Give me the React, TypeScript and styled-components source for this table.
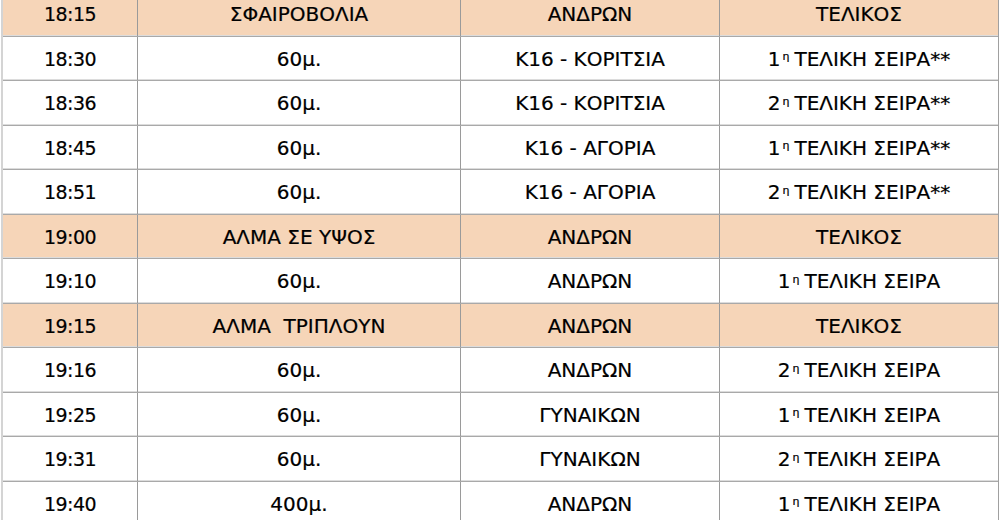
import styled, { createGlobalStyle } from "styled-components";

const GlobalStyle = createGlobalStyle`
  html, body {
    margin: 0;
    padding: 0;
    background: #ffffff;
  }
  body {
    font-family: "DejaVu Sans", Tahoma, Verdana, sans-serif;
    color: #000;
    overflow: hidden;
  }
`;

const Page = styled.div`
  width: 1000px;
  height: 520px;
  overflow: hidden;
  padding-left: 1px;
  box-sizing: border-box;
`;

const Schedule = styled.div`
  margin-top: -8px;
  width: 998px;
  border-left: 2px solid #d4d4d4;
  border-right: 1px solid #a0a0a0;
  box-sizing: border-box;
`;

const Row = styled.div<{ $event?: boolean }>`
  display: grid;
  grid-template-columns: 135px 323px 259px 278px;
  height: 44.5px;
  background: ${(p) => (p.$event ? "#f6d5b8" : "#ffffff")};
  border-bottom: 1px solid #a9a9a9;
  box-shadow: inset 0 -1px 0 #dcdcdc;
  box-sizing: border-box;
`;

const Cell = styled.div`
  display: flex;
  align-items: center;
  justify-content: center;
  font-size: 20px;
  white-space: pre;
  border-right: 1px solid #9a9a9a;
  padding-top: 1px;
  -webkit-text-stroke: 0.2px #000;

  &:last-child {
    border-right: none;
  }
`;

const Digits = styled.span`
  font-size: 19px;
  letter-spacing: -0.6px;
`;

const Ord = styled.span`
  font-size: 11px;
  position: relative;
  top: -2px;
  margin: 0 5px 0 2px;
`;

type Item = {
  time: string;
  what: string;
  who: string;
  phase: string;
  event?: boolean;
};

const rows: Item[] = [
  { time: "18:15", what: "ΣΦΑΙΡΟΒΟΛΙΑ", who: "ΑΝΔΡΩΝ", phase: "ΤΕΛΙΚΟΣ", event: true },
  { time: "18:30", what: "60μ.", who: "Κ16 - ΚΟΡΙΤΣΙΑ", phase: "1|ΤΕΛΙΚΗ ΣΕΙΡΑ**" },
  { time: "18:36", what: "60μ.", who: "Κ16 - ΚΟΡΙΤΣΙΑ", phase: "2|ΤΕΛΙΚΗ ΣΕΙΡΑ**" },
  { time: "18:45", what: "60μ.", who: "Κ16 - ΑΓΟΡΙΑ", phase: "1|ΤΕΛΙΚΗ ΣΕΙΡΑ**" },
  { time: "18:51", what: "60μ.", who: "Κ16 - ΑΓΟΡΙΑ", phase: "2|ΤΕΛΙΚΗ ΣΕΙΡΑ**" },
  { time: "19:00", what: "ΑΛΜΑ ΣΕ ΥΨΟΣ", who: "ΑΝΔΡΩΝ", phase: "ΤΕΛΙΚΟΣ", event: true },
  { time: "19:10", what: "60μ.", who: "ΑΝΔΡΩΝ", phase: "1|ΤΕΛΙΚΗ ΣΕΙΡΑ" },
  { time: "19:15", what: "ΑΛΜΑ  ΤΡΙΠΛΟΥΝ", who: "ΑΝΔΡΩΝ", phase: "ΤΕΛΙΚΟΣ", event: true },
  { time: "19:16", what: "60μ.", who: "ΑΝΔΡΩΝ", phase: "2|ΤΕΛΙΚΗ ΣΕΙΡΑ" },
  { time: "19:25", what: "60μ.", who: "ΓΥΝΑΙΚΩΝ", phase: "1|ΤΕΛΙΚΗ ΣΕΙΡΑ" },
  { time: "19:31", what: "60μ.", who: "ΓΥΝΑΙΚΩΝ", phase: "2|ΤΕΛΙΚΗ ΣΕΙΡΑ" },
  { time: "19:40", what: "400μ.", who: "ΑΝΔΡΩΝ", phase: "1|ΤΕΛΙΚΗ ΣΕΙΡΑ" },
];

function Phase({ text }: { text: string }) {
  const [num, rest] = text.includes("|") ? text.split("|") : ["", text];
  if (!num) return <>{rest}</>;
  return (
    <>
      {num}
      <Ord>η</Ord>
      {rest}
    </>
  );
}

export default function App() {
  return (
    <Page>
      <GlobalStyle />
      <Schedule>
        {rows.map((r) => (
          <Row key={r.time} $event={r.event}>
            <Cell>
              <Digits>{r.time}</Digits>
            </Cell>
            <Cell>{r.what}</Cell>
            <Cell>{r.who}</Cell>
            <Cell>
              <Phase text={r.phase} />
            </Cell>
          </Row>
        ))}
      </Schedule>
    </Page>
  );
}
